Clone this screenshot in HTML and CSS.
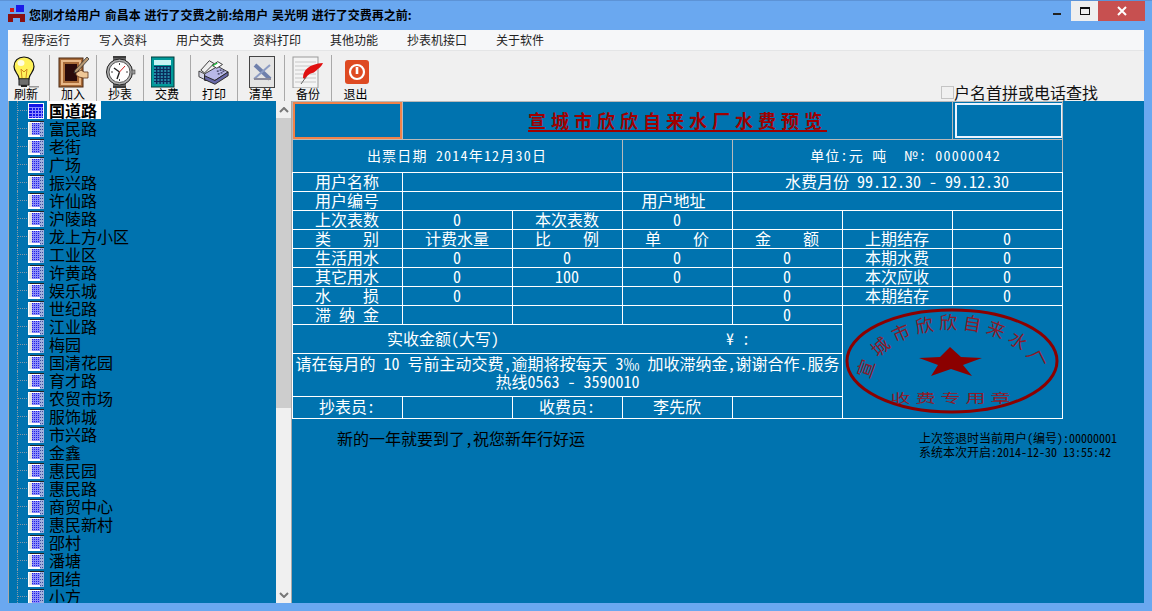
FILE: index.html
```html
<!DOCTYPE html>
<html lang="zh-CN">
<head>
  <meta charset="UTF-8" />
  <title>水费预览</title>
  <link rel="stylesheet" href="styles.css">
</head>
<body>
  <svg class="defs" width="0" height="0">
    <defs>
      <symbol id="leaf" viewBox="0 0 16 16">
        <rect x="0" y="1" width="12" height="15" fill="#fff"/>
        <rect x="2" y="0" width="14" height="1" fill="#222"/>
        <rect x="1" y="2" width="3" height="12" fill="#e2e2e2"/>
        <rect x="4" y="2" width="8" height="12" fill="#8e8ef6"/>
        <path d="M4 2.500h8M4 4.500h8M4 6.500h8M4 8.500h8M4 10.500h8M4 12.500h8" stroke="#1c1ce8" stroke-dasharray="1 1"/>
        <rect x="12" y="1" width="4" height="15" fill="#9fb0dc"/>
        <path d="M12 2.500h4M12 5.500h4M12 8.500h4M12 11.500h4M12 14.500h4" stroke="#3a4aa0" stroke-dasharray="1 1"/>
      </symbol>
      <symbol id="leaf-open" viewBox="0 0 16 16">
        <rect width="16" height="16" fill="#fff"/>
        <rect x="1" y="1" width="14" height="14" fill="#1414e6"/>
        <path d="M1 4.500h14M1 7.500h14M1 10.500h14M1 13.500h14M4.500 4v11M7.500 4v11M10.500 4v11M13.500 4v11" stroke="#8c8cff" stroke-width="1"/>
      </symbol>
    </defs>
  </svg>

  <div class="window">
    <header class="titlebar">
      <svg class="app-icon" width="18" height="18" viewBox="0 0 18 18">
        <rect x="8" y="0" width="8" height="7" fill="#1a1ae8"/>
        <rect x="2" y="3" width="4" height="4" fill="#d01818"/>
        <path d="M0 9h17v8h-5v-4H5v4H0z" fill="#8a1010"/>
      </svg>
      <span class="title-text">您刚才给用户 俞昌本 进行了交费之前:给用户 吴光明 进行了交费再之前:</span>
      <div class="win-buttons">
        <span class="win-min"></span>
        <span class="win-max"><i></i></span>
        <span class="win-close">
          <svg width="10" height="10" viewBox="0 0 10 10"><path d="M1 1l8 8M9 1l-8 8" stroke="#fff" stroke-width="2"/></svg>
        </span>
      </div>
    </header>

    <nav class="menubar">
      <span>程序运行</span>
      <span>写入资料</span>
      <span>用户交费</span>
      <span>资料打印</span>
      <span>其他功能</span>
      <span>抄表机接口</span>
      <span>关于软件</span>
    </nav>

    <div class="toolbar">
      <div class="tool">
        <svg width="32" height="32" viewBox="2 0 32 32">
          <path d="M16 1c-6 0-10 4-10 9.500 0 4 2.500 6 4 9 .6 1.300 1 2.500 1 3.500h10c0-1 .4-2.200 1-3.500 1.500-3 4-5 4-9C26 5 22 1 16 1z" fill="#fff25a" stroke="#111" stroke-width="1.200"/>
          <ellipse cx="13" cy="7" rx="3.500" ry="3" fill="#fffde0"/>
          <path d="M14 22l-1-9 3 3 3-3-1 9" fill="none" stroke="#d08a20"/>
          <rect x="11" y="23" width="10" height="6" fill="#a8a8a8" stroke="#111"/>
          <path d="M11 25h10M11 27h10" stroke="#333"/>
          <path d="M13 29h6v2h-6z" fill="#222"/>
          <path d="M21 30h10v1.500H21z" fill="#999"/>
        </svg>
        <span>刷新</span>
      </div>
      <div class="tool">
        <svg width="32" height="32" viewBox="-1 0 32 32">
          <rect x="1" y="2" width="24" height="29" fill="#a86a38" stroke="#4a2810"/>
          <rect x="3" y="4" width="20" height="25" fill="#e8b888"/>
          <rect x="5" y="6" width="16" height="21" fill="#a86a38"/>
          <rect x="7" y="8" width="12" height="17" fill="#2a0a0a"/>
          <path d="M29 1l2 2-12 13-3 1 1-3z" fill="#b89870" stroke="#333" stroke-width=".8"/>
          <path d="M18 17l5-3 3 2h4v6h-5l-4-1-3-2z" fill="#f0c898" stroke="#5a3018" stroke-width=".8"/>
        </svg>
        <span>加入</span>
      </div>
      <div class="tool">
        <svg width="32" height="32" viewBox="0 0 32 32">
          <rect x="9" y="0" width="13" height="32" fill="#3c3c3c"/>
          <path d="M9 3h13M9 6h13M9 26h13M9 29h13" stroke="#888"/>
          <circle cx="15.500" cy="16" r="13" fill="#b0b0b0" stroke="#222"/>
          <circle cx="15.500" cy="16" r="10.500" fill="#fff" stroke="#555"/>
          <rect x="28" y="14" width="3" height="4" fill="#999" stroke="#444" stroke-width=".6"/>
          <path d="M15.500 16L10 12M15.500 16L13 23" stroke="#222" stroke-width="1.400"/>
          <path d="M15.500 16L21 10" stroke="#d02020"/>
          <path d="M15.500 7v2M15.500 23v2M7 16h2M22 16h2" stroke="#444"/>
        </svg>
        <span>抄表</span>
      </div>
      <div class="tool">
        <svg width="32" height="32" viewBox="4 0 32 32">
          <rect x="4" y="1" width="23" height="30" fill="#009a9a" stroke="#003838"/>
          <rect x="7" y="4" width="17" height="5" fill="#c8f4f4"/>
          <rect x="7" y="10" width="17" height="18" fill="#0a2a5a"/>
          <path d="M7 12h17M7 15h17M7 18h17M7 21h17M7 24h17M7 27h17" stroke="#30a8c0" stroke-dasharray="2 1.400" stroke-width="1.500"/>
        </svg>
        <span>交费</span>
      </div>
      <div class="tool">
        <svg width="32" height="32" viewBox="0 0 34 32">
          <path d="M3 14L12 4l5 3-10 10z" fill="#eee" stroke="#333"/>
          <path d="M1 15l6 3v6l-6-3z" fill="#d8d8e8" stroke="#333"/>
          <path d="M7 18l14-8 11 6-14 9H7z" fill="#b8b8e8" stroke="#333"/>
          <path d="M7 24l11 5 14-9v-4l-14 9-11-5z" fill="#6868a8" stroke="#222"/>
          <path d="M15 9l6-4 5 3-6 4z" fill="#fff" stroke="#333"/>
          <path d="M15 9l5-3 1 1-5 3z" fill="#20c040"/>
          <path d="M20 15h2M23 14h2M26 15h2M21 18h2M24 17h2" stroke="#335" stroke-width="1.300"/>
        </svg>
        <span>打印</span>
      </div>
      <div class="tool">
        <svg width="32" height="32" viewBox="0 0 32 32">
          <rect x="4.500" y="0.500" width="25" height="31" fill="#e4e4e4" stroke="#444"/>
          <path d="M10 9l15 14" stroke="#6f80ac" stroke-width="4"/>
          <path d="M25 9L9 23" stroke="#8c9cc4" stroke-width="2"/>
          <path d="M9 23h17" stroke="#8a8a9a" stroke-width="2"/>
        </svg>
        <span>清单</span>
      </div>
      <div class="tool">
        <svg width="32" height="32" viewBox="0 0 32 32">
          <rect x="1" y="1" width="25" height="31" fill="#f4f4f4" stroke="#999"/>
          <path d="M3 6h21M3 10h21M3 14h21M3 18h21M3 22h21M3 26h21" stroke="#c8c8c8"/>
          <path d="M11 22c0-8 6-14 20-15-3 6-5 5-6 7-2 1-3 3-5 3-3 1-4 2-7 6z" fill="#e01010"/>
          <path d="M9 28l5-7" stroke="#666"/>
        </svg>
        <span>备份</span>
      </div>
      <div class="tool">
        <svg width="32" height="32" viewBox="0 0 32 32">
          <rect x="5" y="4" width="24" height="24" rx="3" fill="#de4a22"/>
          <circle cx="17" cy="16" r="7" fill="none" stroke="#fff" stroke-width="2.200"/>
          <path d="M17 11v7" stroke="#fff" stroke-width="2.600"/>
        </svg>
        <span>退出</span>
      </div>
      <label class="search-check"><i></i>户名首拼或电话查找</label>
    </div>

    <main class="main">
      <aside class="tree-panel">
        <ul class="tree">
          <li class="selected"><b class="branch"></b><svg width="16" height="16"><use href="#leaf-open"/></svg><span>国道路</span></li>
          <li><b class="branch"></b><svg width="16" height="16"><use href="#leaf"/></svg><span>富民路</span></li>
          <li><b class="branch"></b><svg width="16" height="16"><use href="#leaf"/></svg><span>老街</span></li>
          <li><b class="branch"></b><svg width="16" height="16"><use href="#leaf"/></svg><span>广场</span></li>
          <li><b class="branch"></b><svg width="16" height="16"><use href="#leaf"/></svg><span>振兴路</span></li>
          <li><b class="branch"></b><svg width="16" height="16"><use href="#leaf"/></svg><span>许仙路</span></li>
          <li><b class="branch"></b><svg width="16" height="16"><use href="#leaf"/></svg><span>沪陵路</span></li>
          <li><b class="branch"></b><svg width="16" height="16"><use href="#leaf"/></svg><span>龙上方小区</span></li>
          <li><b class="branch"></b><svg width="16" height="16"><use href="#leaf"/></svg><span>工业区</span></li>
          <li><b class="branch"></b><svg width="16" height="16"><use href="#leaf"/></svg><span>许黄路</span></li>
          <li><b class="branch"></b><svg width="16" height="16"><use href="#leaf"/></svg><span>娱乐城</span></li>
          <li><b class="branch"></b><svg width="16" height="16"><use href="#leaf"/></svg><span>世纪路</span></li>
          <li><b class="branch"></b><svg width="16" height="16"><use href="#leaf"/></svg><span>江业路</span></li>
          <li><b class="branch"></b><svg width="16" height="16"><use href="#leaf"/></svg><span>梅园</span></li>
          <li><b class="branch"></b><svg width="16" height="16"><use href="#leaf"/></svg><span>国清花园</span></li>
          <li><b class="branch"></b><svg width="16" height="16"><use href="#leaf"/></svg><span>育才路</span></li>
          <li><b class="branch"></b><svg width="16" height="16"><use href="#leaf"/></svg><span>农贸市场</span></li>
          <li><b class="branch"></b><svg width="16" height="16"><use href="#leaf"/></svg><span>服饰城</span></li>
          <li><b class="branch"></b><svg width="16" height="16"><use href="#leaf"/></svg><span>市兴路</span></li>
          <li><b class="branch"></b><svg width="16" height="16"><use href="#leaf"/></svg><span>金鑫</span></li>
          <li><b class="branch"></b><svg width="16" height="16"><use href="#leaf"/></svg><span>惠民园</span></li>
          <li><b class="branch"></b><svg width="16" height="16"><use href="#leaf"/></svg><span>惠民路</span></li>
          <li><b class="branch"></b><svg width="16" height="16"><use href="#leaf"/></svg><span>商贸中心</span></li>
          <li><b class="branch"></b><svg width="16" height="16"><use href="#leaf"/></svg><span>惠民新村</span></li>
          <li><b class="branch"></b><svg width="16" height="16"><use href="#leaf"/></svg><span>邵村</span></li>
          <li><b class="branch"></b><svg width="16" height="16"><use href="#leaf"/></svg><span>潘塘</span></li>
          <li><b class="branch"></b><svg width="16" height="16"><use href="#leaf"/></svg><span>团结</span></li>
          <li><b class="branch"></b><svg width="16" height="16"><use href="#leaf"/></svg><span>小方</span></li>
        </ul>
        <div class="scrollbar">
          <div class="scroll-btn"><svg width="10" height="6" viewBox="0 0 10 6"><path d="M1 5l4-4 4 4" fill="none" stroke="#777" stroke-width="2"/></svg></div>
          <div class="scroll-thumb"></div>
          <div class="scroll-track"></div>
          <div class="scroll-btn"><svg width="10" height="6" viewBox="0 0 10 6"><path d="M1 1l4 4 4-4" fill="none" stroke="#777" stroke-width="2"/></svg></div>
        </div>
      </aside>

      <section class="sheet">
        <table class="bill">
          <colgroup>
            <col class="c"><col class="c"><col class="c"><col class="c"><col class="c"><col class="c"><col class="c">
          </colgroup>
          <tr class="head-row">
            <td class="box-cell"><div class="box-orange"></div></td>
            <td colspan="5" class="bill-title"><span>宣城市欣欣自来水厂水费预览</span></td>
            <td class="box-cell"><div class="box-white"></div></td>
          </tr>
          <tr class="info-row">
            <td colspan="3">出票日期 2014年12月30日</td>
            <td></td>
            <td colspan="3" class="unit-cell">单位:元 吨&nbsp;&nbsp;№: 00000042</td>
          </tr>
          <tr>
            <td>用户名称</td>
            <td colspan="2"></td>
            <td></td>
            <td colspan="3">水费月份 99.12.30 - 99.12.30</td>
          </tr>
          <tr>
            <td>用户编号</td>
            <td colspan="2"></td>
            <td class="addr-cell">用户地址</td>
            <td colspan="3"></td>
          </tr>
          <tr>
            <td>上次表数</td><td>0</td><td>本次表数</td><td>0</td><td></td><td></td><td></td>
          </tr>
          <tr>
            <td><span class="spread">类 别</span></td><td>计费水量</td><td><span class="spread">比 例</span></td><td><span class="spread">单 价</span></td><td><span class="spread">金 额</span></td><td>上期结存</td><td>0</td>
          </tr>
          <tr>
            <td>生活用水</td><td>0</td><td>0</td><td>0</td><td>0</td><td>本期水费</td><td>0</td>
          </tr>
          <tr>
            <td>其它用水</td><td>0</td><td>100</td><td>0</td><td>0</td><td>本次应收</td><td>0</td>
          </tr>
          <tr>
            <td><span class="spread">水 损</span></td><td>0</td><td></td><td></td><td>0</td><td>本期结存</td><td>0</td>
          </tr>
          <tr>
            <td><span class="spread">滞 纳 金</span></td><td></td><td></td><td></td><td>0</td>
            <td colspan="2" rowspan="4" class="stamp-cell">
              <svg class="stamp" width="220" height="112" viewBox="0 0 220 112">
                <defs>
                  <path id="stamp-arc" d="M28 74A82 51 0 0 1 192 74"/>
                </defs>
                <ellipse cx="109" cy="55" rx="105" ry="51" fill="none" stroke="#8b0000" stroke-width="3"/>
                <polygon points="107,41 118,51 139,52 120,59 129,70 108,63 88,70 95,59 76,52 97,51" fill="#8b0000"/>
                <text class="stamp-ring"><textPath href="#stamp-arc">宣城市欣欣自来水厂</textPath></text>
                <text class="stamp-foot" transform="translate(110 97) scale(1 .6)" text-anchor="middle">收费专用章</text>
              </svg>
            </td>
          </tr>
          <tr class="paid-row">
            <td colspan="5"><div class="paid"><span>实收金额(大写)</span><span>¥ :</span></div></td>
          </tr>
          <tr class="note-row">
            <td colspan="5">请在每月的 10 号前主动交费,逾期将按每天 3‰ 加收滞纳金,谢谢合作.服务热线0563 - 3590010</td>
          </tr>
          <tr class="sign-row">
            <td>抄表员:</td><td></td><td>收费员:</td><td>李先欣</td><td></td>
          </tr>
        </table>

        <div class="sheet-foot">
          <p class="greeting">新的一年就要到了,祝您新年行好运</p>
          <p class="login-info">上次签退时当前用户(编号):00000001<br>系统本次开启:2014-12-30 13:55:42</p>
        </div>
      </section>
    </main>
  </div>
</body>
</html>
```

FILE: styles.css
```css
* {
  box-sizing: border-box;
}

body {
  margin: 0;
  font-family: "Noto Sans Mono CJK SC", "Noto Sans CJK SC", sans-serif;
  color: #000;
  overflow: hidden;
}

.defs {
  display: block;
  height: 0;
}

.window {
  width: 1152px;
  height: 611px;
  padding: 0 8px 8px;
  background: #6aa8f0;
  border-top: 1px solid #5d93d6;
  display: flex;
  flex-direction: column;
}

/* title bar */
.titlebar {
  height: 29px;
  padding-bottom: 3px;
  display: flex;
  align-items: center;
  flex-shrink: 0;
}

.app-icon {
  margin-right: 3px;
}

.title-text {
  font-family: "Noto Sans CJK SC", sans-serif;
  font-size: 12px;
  font-weight: 700;
  word-spacing: 1px;
}

.win-buttons {
  margin-left: auto;
  align-self: flex-start;
  display: flex;
  margin-right: -1px;
}

.win-min {
  width: 18px;
  height: 20px;
  position: relative;
}

.win-min::after {
  content: "";
  position: absolute;
  left: 0;
  top: 12px;
  width: 8px;
  height: 2px;
  background: #222;
}

.win-max {
  width: 27px;
  height: 20px;
  background: #efefef;
  display: flex;
  align-items: center;
  justify-content: center;
}

.win-max i {
  display: block;
  width: 10px;
  height: 8px;
  border: 1px solid #111;
  border-top-width: 2px;
}

.win-close {
  width: 47px;
  height: 20px;
  background: #c75050;
  display: flex;
  align-items: center;
  justify-content: center;
}

/* menu */
.menubar {
  height: 21px;
  flex-shrink: 0;
  padding: 0 0 2px 14px;
  display: flex;
  gap: 29px;
  align-items: center;
  font-size: 12px;
  color: #222;
  background: #f6f7f9;
  border-bottom: 1px solid #e4e5e6;
}

/* toolbar */
.toolbar {
  height: 50px;
  flex-shrink: 0;
  display: flex;
  background: #f0f0f0;
  overflow: hidden;
}

.tool {
  width: 47px;
  height: 50px;
  margin-top: 4px;
  padding-top: 1px;
  border-right: 1px solid #a9a9a9;
  display: flex;
  flex-direction: column;
  align-items: center;
  font-size: 12px;
  line-height: 14px;
  flex-shrink: 0;
}

.tool:first-child {
  margin-left: -5px;
}

.tool:nth-child(8) {
  border-right: 0;
}

.tool svg {
  flex-shrink: 0;
}

.tool span {
  margin-top: -1px;
}

.search-check {
  margin-left: auto;
  margin-right: 46px;
  align-self: flex-end;
  display: flex;
  align-items: center;
  font-size: 16px;
  line-height: 18px;
  color: #111;
}

.search-check i {
  display: block;
  width: 13px;
  height: 13px;
  border: 1px solid #c4c4c4;
}

/* tree */
.main {
  flex: 1;
  min-height: 0;
  display: flex;
  background: #0073af;
}

.tree-panel {
  width: 284px;
  flex-shrink: 0;
  display: flex;
  border-left: 1px solid #a9a9a9;
  overflow: hidden;
}

.tree {
  flex: 1;
  margin: 0;
  padding: 0;
  list-style: none;
  overflow: hidden;
}

.tree li {
  height: 18px;
  display: flex;
  align-items: center;
  font-size: 16px;
  line-height: 18px;
  color: #000;
}

.branch {
  width: 11px;
  height: 18px;
  margin-left: 8px;
  flex-shrink: 0;
  border-left: 1px dotted #8a9aa8;
  background: repeating-linear-gradient(90deg, #8a9aa8 0 1px, transparent 1px 2px) no-repeat 0 center / 100% 1px;
}

.tree li svg {
  flex-shrink: 0;
  margin-top: 1px;
}

.tree li span {
  margin-left: 5px;
}

.tree li.selected span {
  background: #fff;
  font-weight: 700;
  padding: 0 4px 0 2px;
  margin-left: 3px;
}

.scrollbar {
  width: 16px;
  flex-shrink: 0;
  display: flex;
  flex-direction: column;
  background: #f0f0f0;
  border-right: 1px solid #a9a9a9;
}

.scroll-btn {
  height: 17px;
  display: flex;
  align-items: center;
  justify-content: center;
}

.scroll-thumb {
  height: 290px;
  background: #cdcdcd;
}

.scroll-track {
  flex: 1;
}

/* bill table */
.sheet {
  flex: 1;
  min-width: 0;
}

.bill {
  border-collapse: collapse;
  table-layout: fixed;
  width: 771px;
  font-size: 16px;
  line-height: 16px;
  color: #fff;
  text-align: center;
}

.bill .c {
  width: 110px;
}

.bill td {
  border: 1px solid #fff;
  padding: 0 1px 2px 0;
  height: 19px;
}

.head-row td {
  height: 38px;
  border-color: #b9b9b9;
}

.bill .box-cell {
  padding: 0;
}

.box-orange {
  height: 37px;
  border: 2px solid #f0824a;
}

.box-white {
  width: 108px;
  height: 35px;
  margin: 1px 0 1px 2px;
  border: 2px solid #eaf4ff;
}

.bill-title span {
  display: inline-block;
  padding-left: 1px;
  color: #a00000;
  font-size: 18px;
  font-weight: 700;
  letter-spacing: 5px;
  line-height: 22px;
  text-decoration: underline;
  text-underline-offset: 2px;
  text-decoration-thickness: 2px;
}

.info-row td {
  height: 33px;
  font-size: 14px;
  letter-spacing: 1.200px;
  border-color: #b9b9b9;
  border-bottom-color: #fff;
}

.bill .unit-cell {
  padding-left: 17px;
}

.bill .addr-cell {
  padding-right: 8px;
}

.spread {
  display: inline-block;
  width: 64px;
  text-align-last: justify;
}

.paid-row td {
  height: 29px;
}

.paid {
  display: flex;
  justify-content: space-between;
  padding: 0 91px 0 94px;
}

.bill .note-row td {
  height: 42px;
  padding: 0;
  line-height: 18px;
  vertical-align: top;
}

.bill .sign-row td {
  height: 22px;
  padding-bottom: 3px;
}

.bill .stamp-cell {
  padding: 0;
  vertical-align: top;
}

.stamp {
  display: block;
}

.stamp-ring,
.stamp-foot {
  fill: #8b1a2a;
}

.stamp-ring {
  font-size: 18px;
  letter-spacing: 5px;
}

.stamp-foot {
  font-size: 20px;
  letter-spacing: 5px;
}

.sheet-foot {
  width: 825px;
  padding: 10px 0 0 45px;
  display: flex;
  justify-content: space-between;
}

.greeting {
  margin: 0;
  font-size: 16px;
  line-height: 18px;
}

.login-info {
  margin: 2px 0 0;
  font-size: 12px;
  line-height: 14px;
}
```
